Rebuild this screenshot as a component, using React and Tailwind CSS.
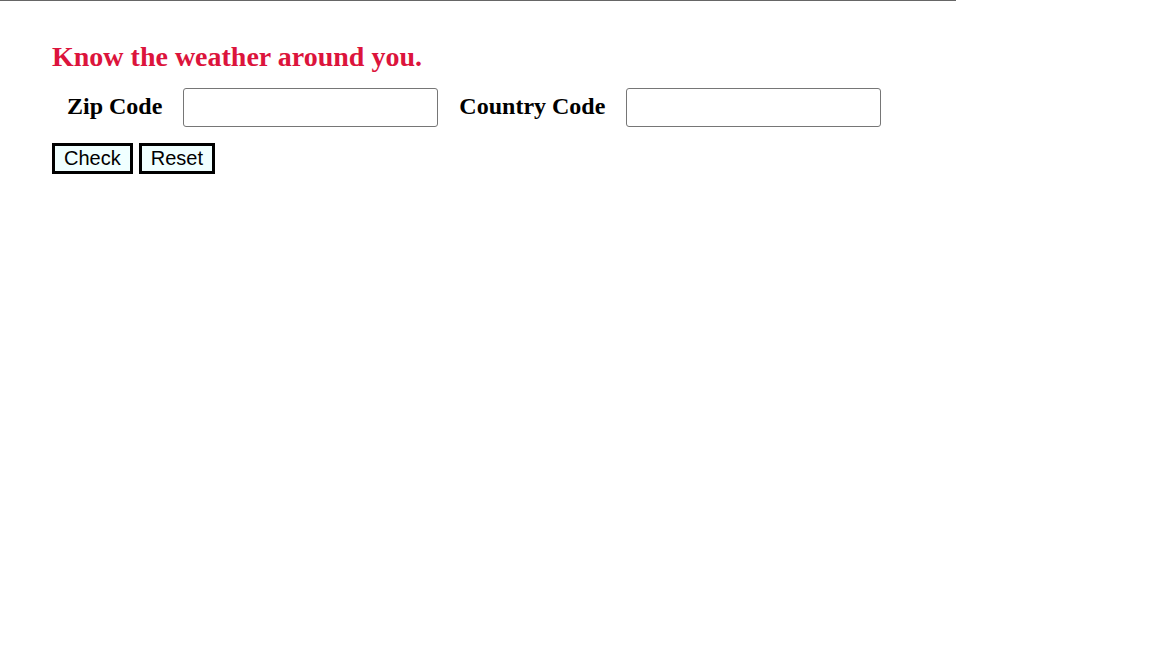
export default function App() {
  return (
    <div className="min-h-[648px] w-[1152px] bg-white">
      <div className="h-px w-[956px] bg-[#666666]" />
      <div className="pl-[52px]">
        <h1 className="mt-[40px] text-[28px] leading-[32px] font-bold text-[#dc143c]" style={{ fontFamily: '"Liberation Serif", "Times New Roman", serif' }}>
          Know the weather around you.
        </h1>
        <div className="mt-[15px] flex items-center" style={{ fontFamily: '"Liberation Serif", "Times New Roman", serif' }}>
          <label className="mb-[4px] ml-[15px] text-[24px] leading-[28px] font-bold text-black">Zip Code</label>
          <input type="text" className="ml-[21px] h-[39px] w-[255px] rounded-[3px] border border-[#767676] bg-white" />
          <label className="mb-[4px] ml-[21px] text-[24px] leading-[28px] font-bold text-black">Country Code</label>
          <input type="text" className="ml-[21px] h-[39px] w-[255px] rounded-[3px] border border-[#767676] bg-white" />
        </div>
        <div className="mt-[16px] flex gap-[6px]" style={{ fontFamily: '"Liberation Sans", Arial, sans-serif' }}>
          <button className="h-[31px] border-[3px] border-black bg-[#f0ffff] px-[9px] text-[20px] leading-[23px] text-black">Check</button>
          <button className="h-[31px] border-[3px] border-black bg-[#f0ffff] px-[9px] text-[20px] leading-[23px] text-black">Reset</button>
        </div>
      </div>
    </div>
  );
}
